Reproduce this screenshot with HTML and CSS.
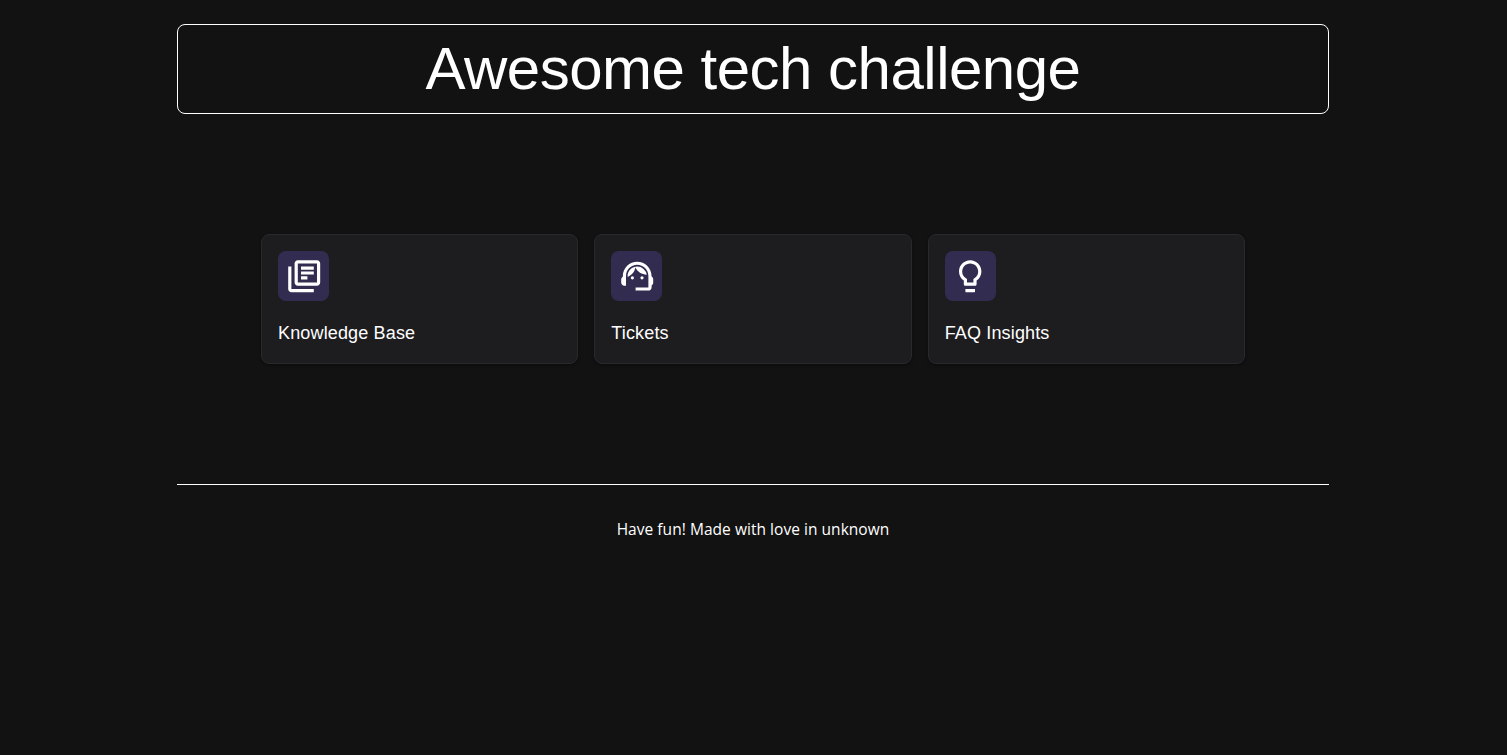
FILE: index.html
```html
<!DOCTYPE html>
<html lang="en">
<head>
<meta charset="utf-8">
<title>Awesome tech challenge</title>
<link rel="stylesheet" href="styles.css">
</head>
<body>
<div class="container">
  <header class="header"><h1 class="title">Awesome tech challenge</h1></header>
  <main class="cards">
    <a class="card">
      <span class="icon-box"><svg class="icon" viewBox="0 0 24 24"><path d="M4 6H2v14c0 1.1.9 2 2 2h14v-2H4V6zm16-4H8c-1.1 0-2 .9-2 2v12c0 1.1.9 2 2 2h12c1.1 0 2-.9 2-2V4c0-1.1-.9-2-2-2zm0 14H8V4h12v12zM10 9h8v2h-8zm0 3h4v2h-4zm0-6h8v2h-8z"/></svg></span>
      <span class="label">Knowledge Base</span>
    </a>
    <a class="card">
      <span class="icon-box"><svg class="icon" viewBox="0 0 24 24"><path d="M21 12.22C21 6.73 16.74 3 12 3c-4.69 0-9 3.65-9 9.28-.6.34-1 .98-1 1.72v2c0 1.1.9 2 2 2h1v-6.1c0-3.87 3.13-7 7-7s7 3.13 7 7V19h-8v2h8c1.1 0 2-.9 2-2v-1.22c.59-.31 1-.92 1-1.64v-2.3c0-.7-.41-1.31-1-1.62z"/><circle cx="9" cy="13" r="1"/><circle cx="15" cy="13" r="1"/><path d="M18 11.03A6.04 6.04 0 0 0 12.05 6c-3.03 0-6.29 2.51-6.03 6.45a8.075 8.075 0 0 0 4.86-5.89c1.31 2.63 4 4.44 7.12 4.47z"/></svg></span>
      <span class="label">Tickets</span>
    </a>
    <a class="card">
      <span class="icon-box"><svg class="icon" viewBox="0 0 24 24"><path d="M9 21.7c0 .17.13.3.3.3h5.4c.17 0 .3-.13.3-.3V20H9v1.7zm3-19.7C8.14 2 5 5.14 5 9c0 2.38 1.19 4.47 3 5.74V17c0 .55.45 1 1 1h6c.55 0 1-.45 1-1v-2.26c1.81-1.27 3-3.36 3-5.74 0-3.86-3.14-7-7-7zm2.85 11.1-.85.6V16h-4v-2.3l-.85-.6A4.997 4.997 0 0 1 7 9c0-2.76 2.24-5 5-5s5 2.24 5 5c0 1.63-.8 3.16-2.15 4.1z"/></svg></span>
      <span class="label">FAQ Insights</span>
    </a>
  </main>
  <footer class="footer">Have fun! Made with love in unknown</footer>
</div>
</body>
</html>
```
FILE: styles.css
```css
* {
  box-sizing: border-box;
}

body {
  margin: 0;
  padding-right: 1px;
  background: #121212;
  color: #fff;
  font-family: "Liberation Sans", Arial, sans-serif;
}

.container {
  width: 1152px;
  margin: 0 auto;
  padding-top: 24px;
}

.header {
  height: 90px;
  border: 1px solid #fff;
  border-radius: 8px;
  text-align: center;
}

.title {
  margin: 0;
  font-size: 60px;
  font-weight: 400;
  line-height: 88px;
  letter-spacing: -0.5px;
}

.cards {
  display: grid;
  grid-template-columns: repeat(3, 1fr);
  gap: 16px;
  margin: 120px 84px;
}

.card {
  display: flex;
  flex-direction: column;
  align-items: flex-start;
  gap: 18px;
  height: 130px;
  padding: 16px;
  border: 1px solid #29292d;
  border-radius: 8px;
  background: #1d1d1f;
  box-shadow: 0 1px 3px rgb(0 0 0 / 40%);
}

.icon-box {
  display: flex;
  align-items: center;
  justify-content: center;
  width: 51px;
  height: 50px;
  padding-left: 0.6px;
  border-radius: 8px;
  background: #322c51;
}

.icon {
  width: 38.4px;
  height: 38.4px;
  fill: #fff;
}

.label {
  font-size: 18px;
  line-height: 28px;
  letter-spacing: 0.15px;
}

.footer {
  padding-top: 32px;
  border-top: 1px solid #fff;
  font-family: "Open Sans", "Noto Sans", sans-serif;
  font-size: 15.5px;
  line-height: 24px;
  letter-spacing: 0.04px;
  text-align: center;
}
```
